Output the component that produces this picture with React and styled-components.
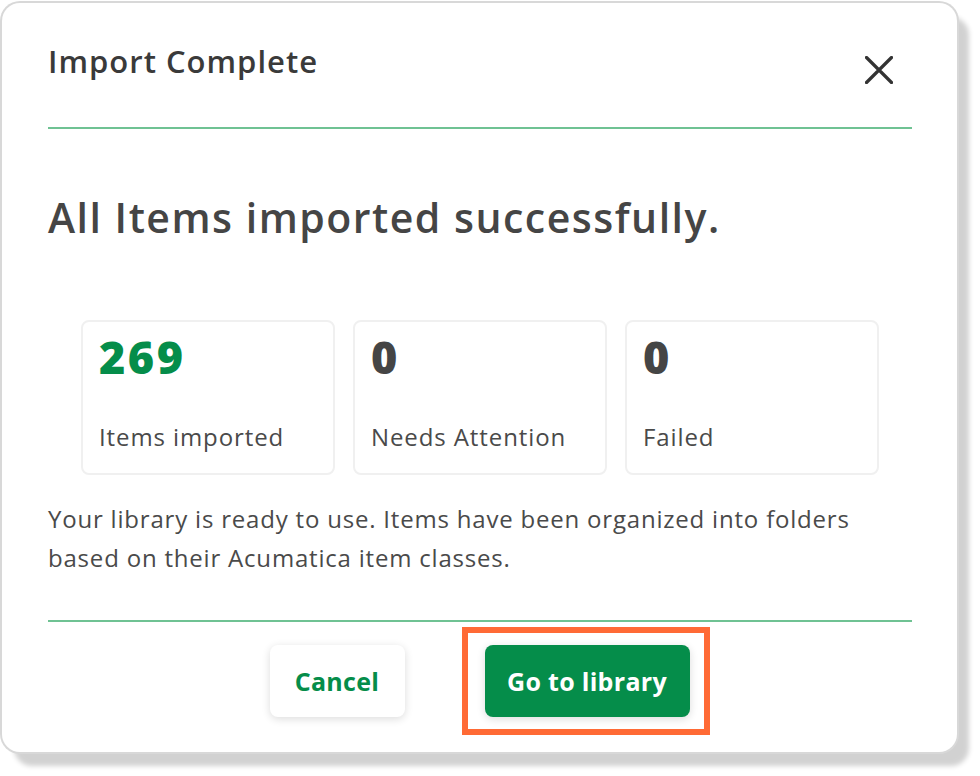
import React from 'react';
import styled, { createGlobalStyle } from 'styled-components';

const GlobalStyle = createGlobalStyle`
  body {
    margin: 0;
    background: #fff;
    font-family: 'Open Sans', 'Noto Sans', sans-serif;
  }
`;

const stats = [
  { value: '269', label: 'Items imported', accent: true },
  { value: '0', label: 'Needs Attention' },
  { value: '0', label: 'Failed' },
];

const App = () => {
  return (
    <>
      <GlobalStyle />
      <Page>
        <Dialog>
          <Header>
            <Title>Import Complete</Title>
            <CloseButton aria-label='close'>
              <svg width='28' height='28' viewBox='0 0 28 28'>
                <path
                  d='M1.5 1.5 L26.5 26.5 M26.5 1.5 L1.5 26.5'
                  stroke='#333'
                  strokeWidth='3.2'
                  strokeLinecap='round'
                  fill='none'
                />
              </svg>
            </CloseButton>
          </Header>
          <Divider />
          <Heading>All Items imported successfully.</Heading>
          <StatRow>
            {stats.map((s) => (
              <StatCard key={s.label}>
                <StatValue accent={s.accent}>{s.value}</StatValue>
                <StatLabel>{s.label}</StatLabel>
              </StatCard>
            ))}
          </StatRow>
          <Message>
            Your library is ready to use. Items have been organized into folders
            based on their Acumatica item classes.
          </Message>
          <Divider />
          <Footer>
            <Button width={135}>Cancel</Button>
            <Highlight>
              <Button primary width={205}>
                Go to library
              </Button>
            </Highlight>
          </Footer>
        </Dialog>
      </Page>
    </>
  );
};

const Page = styled.div`
  width: 980px;
  height: 776px;
  padding: 3px 0 0 2px;
  box-sizing: border-box;
`;

const Dialog = styled.div`
  width: 955px;
  height: 749px;
  box-sizing: border-box;
  background: #fff;
  border-radius: 18px;
  padding: 40px 46px 0;
  box-shadow: 0 0 0 2px #d8d8d8, 12px 14px 5px rgba(0, 0, 0, 0.18);
  color: #404040;
`;

const Header = styled.div`
  display: flex;
  justify-content: space-between;
  align-items: flex-start;
  height: 84px;
`;

const Title = styled.h1`
  margin: 0;
  font-size: 31px;
  font-weight: 600;
  color: #3a3a3a;
  line-height: 1.2;
  letter-spacing: 1px;
`;

const CloseButton = styled.button`
  border: none;
  background: none;
  padding: 0;
  margin: 13px 18px 0 0;
  display: flex;
  cursor: pointer;
`;

const Divider = styled.div`
  width: 864px;
  height: 2px;
  background: #6fc293;
`;

const Heading = styled.h2`
  margin: 64px 0 0;
  font-size: 41px;
  font-weight: 600;
  color: #454545;
  line-height: 1.2;
  letter-spacing: 1.5px;
`;

const StatRow = styled.div`
  display: flex;
  gap: 18px;
  margin: 78px 0 0 33px;
`;

const StatCard = styled.div`
  width: 254px;
  height: 155px;
  box-sizing: border-box;
  border: 2px solid #f0f0f0;
  border-radius: 8px;
  padding: 8px 16px 0;
  display: flex;
  flex-direction: column;
`;

const StatValue = styled.div`
  font-size: 45px;
  font-weight: 800;
  line-height: 1.2;
  letter-spacing: 2.5px;
  color: ${({ accent }) => (accent ? '#058d4a' : '#454545')};
`;

const StatLabel = styled.div`
  margin-top: 39px;
  font-size: 24px;
  line-height: 1.2;
  letter-spacing: 0.9px;
  color: #4a4a4a;
`;

const Message = styled.p`
  margin: 24px 0 43px;
  width: 864px;
  font-size: 24px;
  line-height: 39px;
  letter-spacing: 0.8px;
  color: #4a4a4a;
`;

const Footer = styled.div`
  display: flex;
  justify-content: center;
  align-items: center;
  gap: 57px;
  margin-top: 5px;
  padding-left: 20px;
`;

const Highlight = styled.div`
  border: 6px solid #ff6a35;
  padding: 12px 14px 12px 17px;
`;

const Button = styled.button`
  width: ${({ width }) => width}px;
  height: 72px;
  padding: 0;
  border: none;
  border-radius: 8px;
  font-family: inherit;
  font-size: 25px;
  font-weight: 700;
  letter-spacing: 0.3px;
  cursor: pointer;
  background: ${({ primary }) => (primary ? '#058d4a' : '#fff')};
  color: ${({ primary }) => (primary ? '#fff' : '#058d4a')};
  box-shadow: 0 2px 8px rgba(0, 0, 0, 0.14);
`;

export default App;
